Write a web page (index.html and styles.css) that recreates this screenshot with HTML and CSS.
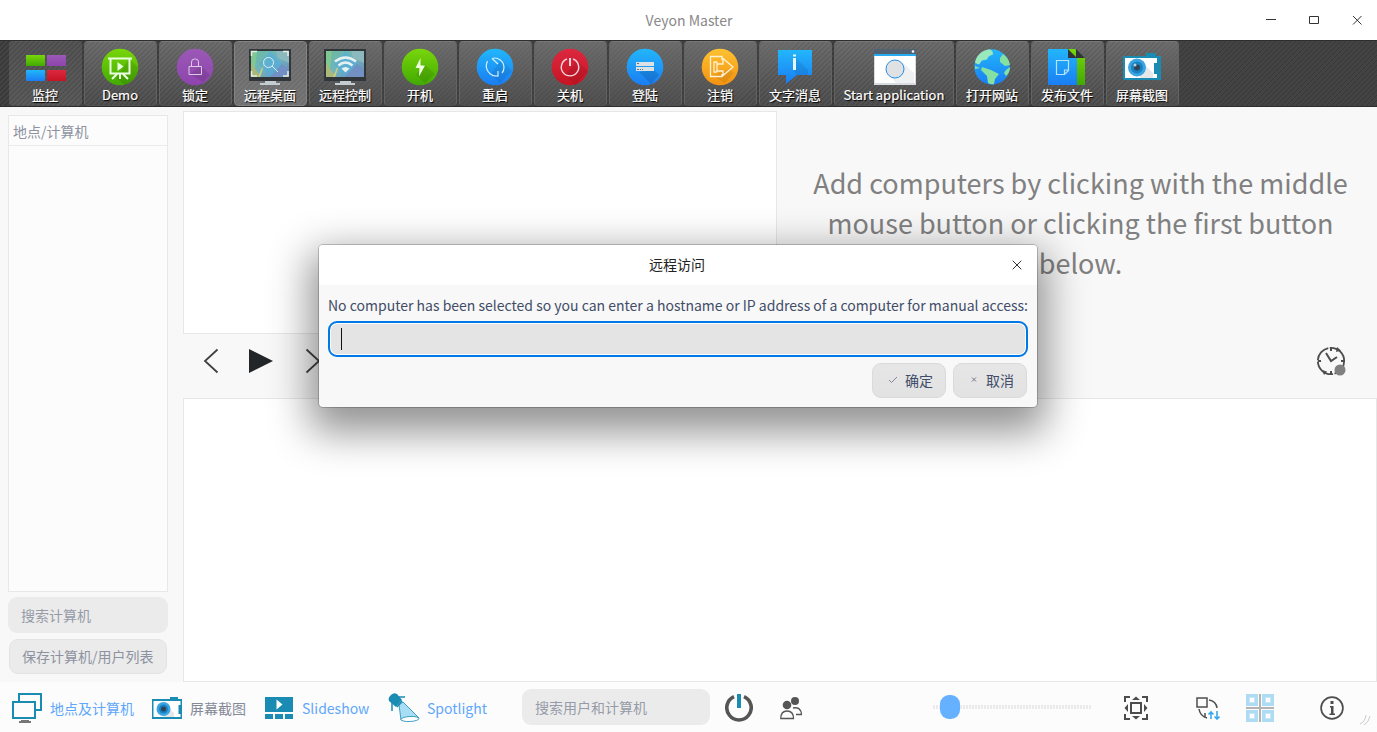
FILE: index.html
```html
<!DOCTYPE html>
<html lang="zh-CN">
<head>
<meta charset="utf-8">
<title>Veyon Master</title>
<link rel="stylesheet" href="styles.css">
</head>
<body>
<svg class="defs" width="0" height="0" aria-hidden="true">
  <defs>
    <linearGradient id="green" x2="0" y2="1"><stop stop-color="#78d60a"/><stop offset="1" stop-color="#42a903"/></linearGradient>
    <linearGradient id="purple" x2="0" y2="1"><stop stop-color="#9b59b6"/><stop offset="1" stop-color="#8e44ad"/></linearGradient>
    <linearGradient id="blue" x2="0" y2="1"><stop stop-color="#22b6fb"/><stop offset="1" stop-color="#1a7df3"/></linearGradient>
    <linearGradient id="red" x2="0" y2="1"><stop stop-color="#dc2840"/><stop offset="1" stop-color="#c61423"/></linearGradient>
    <linearGradient id="orange" x2="0" y2="1"><stop stop-color="#fdc231"/><stop offset="1" stop-color="#f39210"/></linearGradient>
    <linearGradient id="screen" y2="1"><stop stop-color="#6cba9b"/><stop offset=".5" stop-color="#6fb5bf"/><stop offset="1" stop-color="#6c86bb"/></linearGradient>
    <g id="monitor">
      <path d="M0 0h42v32H0z" fill="#31363b"/>
      <path d="M2 2h38v26H2z" fill="url(#screen)"/>
      <path d="M2 2h6l-3 26H2z" fill="#7fc793"/><path d="M2 28V14l10 14z" fill="#aab87c"/>
      <path d="M9 28L20 2l-9 26z" fill="#d2cf7e"/><path d="M21 2l12 13-12 13-11-13z" fill="#53aedb" opacity=".65"/>
      <path d="M27 2h13v12L29 9z" fill="#8bb9bd"/><path d="M21 28l12-13 7 6v7z" fill="#7290c3"/>
      <path d="M16 32h11v2h4v2H11v-2h5z" fill="#c3cdd1"/>
    </g>
    <g id="camera">
      <path d="M23 0h10v3h5v24H0V3h23z" fill="#1a8bb2"/>
      <path d="M2 5h32v5h-3v11h3v4H2z" fill="#fff"/><path d="M18 8l12 12v5H17z" fill="#e5e7e9"/>
      <circle cx="14" cy="14.500" r="9" fill="#3aa5e0"/><circle cx="14" cy="14.500" r="6" fill="#1782c3"/><circle cx="14" cy="14.500" r="3" fill="#2f4356"/><circle cx="12" cy="12" r="1.500" fill="#bcd2dd"/>
    </g>
  </defs>
</svg>

<header class="titlebar">
  <span class="window-title">Veyon Master</span>
  <svg class="window-controls" width="112" height="40" viewBox="0 0 112 40"><path d="M1 19.500h10M44.500 16.500h9v7h-9zM88 16l8.500 8.500M96.500 16l-8.500 8.500" fill="none" stroke="#333"/></svg>
</header>

<nav class="toolbar">
  <div class="tool active"><svg viewBox="0 0 44 38"><path d="M2 7h19v11H2z" fill="url(#green)"/><path d="M23 7h19v11H23z" fill="url(#purple)"/><path d="M2 22h19v11H2z" fill="url(#blue)"/><path d="M23 22h19v11H23z" fill="url(#red)"/></svg><span>监控</span></div>
  <div class="tool"><svg viewBox="0 0 44 38"><circle cx="21" cy="19" r="18.300" fill="url(#green)"/><path d="M30 11l9 8c0 8-5 15-13 18l-9-7z" opacity=".1"/><path d="M9 10.500h24M11.500 11v14.500h19V11M21 26v5M18 26l-5 5M24 26l5 5" fill="none" stroke="#e8ffe0" stroke-width="2"/><path d="M18.500 14l6 4.500-6 4.500z" fill="#e8ffe0"/></svg><span>Demo</span></div>
  <div class="tool"><svg viewBox="0 0 44 38"><circle cx="21" cy="19" r="18.300" fill="url(#purple)"/><path d="M27 18l9 9-7 7-13-8z" opacity=".1"/><path d="M15 18.500h12.500v8H15zM17.500 18v-4q0-3 3-3h1q3 0 3 3v4" fill="none" stroke="#dccbe5"/></svg><span>锁定</span></div>
  <div class="tool hover"><svg viewBox="0 0 44 38"><use href="#monitor" x="0" y="1"/><path d="M2.500 8V3.500H8M34 3.500h5V8M2.500 23v5H8M34 28h5v-5" fill="none" stroke="#e3efe3" stroke-width="1.500"/><circle cx="19.500" cy="14.500" r="5" fill="none" stroke="#e0edf0"/><path d="M23 18l6 6" stroke="#e0edf0"/></svg><span>远程桌面</span></div>
  <div class="tool"><svg viewBox="0 0 44 38"><use href="#monitor" x="0" y="1"/><path d="M11 13.500q10.500-8 21 0M14.500 17.500q7-6 14 0" fill="none" stroke="#e7f1f1" stroke-width="2.500"/><path d="M17.500 20.500q4-3 8 0l-4 4z" fill="#e7f1f1"/></svg><span>远程控制</span></div>
  <div class="tool"><svg viewBox="0 0 44 38"><circle cx="21" cy="19" r="18.300" fill="url(#green)"/><path d="M25 16l11 10-10 9-9-8z" opacity=".09"/><path d="M21.500 10L16.500 20h4l-.5 8.500 6-11h-4.500z" fill="#f0ffdf"/></svg><span>开机</span></div>
  <div class="tool"><svg viewBox="0 0 44 38"><circle cx="21" cy="19" r="18.300" fill="url(#blue)"/><path d="M27 12l11 11-12 12-9-9z" opacity=".08"/><path d="M18 10.500c6-2 12 3 12 9 0 2-.7 4-2 5.500M13.500 13c-3 6 0 13 7 15M18 10.500l6 5.500M18 27.500l6 .5v-5" fill="none" stroke="#d4f0ff" stroke-width="1.200"/></svg><span>重启</span></div>
  <div class="tool"><svg viewBox="0 0 44 38"><circle cx="21" cy="19" r="18.300" fill="url(#red)"/><path d="M28 13l11 10-13 14-10-10z" opacity=".08"/><path d="M18 11a8.700 8.700 0 1 0 6 0" fill="none" stroke="#f6d8dc" stroke-width="1.400"/><path d="M20 10h2v8h-2z" fill="#f6d8dc"/></svg><span>关机</span></div>
  <div class="tool"><svg viewBox="0 0 44 38"><circle cx="21" cy="19" r="18.300" fill="url(#blue)"/><path d="M30 22l5 5-8 9-12-12z" opacity=".12"/><path d="M12 14h18v4H12zM12 19h18v4H12z" fill="#dce1e4"/><path d="M13 15.500h2M13 21.500h2m1 0h1m1 0h1" stroke="#60737e"/></svg><span>登陆</span></div>
  <div class="tool"><svg viewBox="0 0 44 38"><circle cx="21" cy="19" r="18.300" fill="url(#orange)"/><path d="M30 21l5 4-9 10-12-7z" opacity=".07"/><path d="M23 12V8.500H11.500v20H23V26M18 14h-3v10h3M18 14v2h6v-5.500l10 8.500-10 8.500V23h-6z" fill="none" stroke="#fff1d4" stroke-width="1.300"/></svg><span>注销</span></div>
  <div class="tool"><svg viewBox="0 0 44 38"><path d="M4 2h34v25H23l-11 9v-9H4z" fill="url(#blue)"/><path d="M22 10l12 12v5H23l-3-4z" opacity=".08"/><path d="M19 6.500h3v2h-3zM19 10h3v12h-3z" fill="#e5f6ff"/></svg><span>文字消息</span></div>
  <div class="tool wide"><svg viewBox="0 0 44 38"><path d="M1 1h42v36H1z" fill="#d8dce0"/><path d="M1 1h42v5H1z" fill="#536273"/><path d="M1 6h42v2H1z" fill="#26aaf0"/><path d="M2 8h40v27H2z" fill="#fff"/><path d="M29 14l12 11v10H23l-7-8z" fill="#eef0f1"/><circle cx="22" cy="21" r="9" fill="#dfe1e3" stroke="#238eef"/><circle cx="40" cy="3.500" r="1.300" fill="#fff"/></svg><span>Start application</span></div>
  <div class="tool"><svg viewBox="0 0 44 38"><circle cx="21" cy="19" r="17.700" fill="url(#blue)"/><path d="M4 15C5 8 10 3 17 1.500c4-.5 5 2 5 5-3 1-5 2-6 5l-5 1-3 4z" fill="#98eabd"/><path d="M32 6c4 3 6 6 7 11l-5 1-5-4v-4zM11 19l9 3 8 4-4 5-1 5q-3 1-6-1l-1-7-6-6zM35 22l4-3q0 6-4 9l-2-3zM4 18l5 2-5 1z" fill="#84e1a2"/></svg><span>打开网站</span></div>
  <div class="tool"><svg viewBox="0 0 44 38"><path d="M15 1h14l10 9v27H15z" fill="url(#green)"/><path d="M2 1h20v9h9v27H2z" fill="url(#blue)"/><path d="M22 1l9 9h-9zM30 1l9 9h-9z" fill="#30343a"/><path d="M10.500 12.500h12v10l-4 4h-8zM18.500 26v-4h4" fill="none" stroke="#b5e5fa" stroke-width="1.200"/></svg><span>发布文件</span></div>
  <div class="tool"><svg viewBox="0 0 44 38"><use href="#camera" x="2" y="5"/></svg><span>屏幕截图</span></div>
</nav>

<main class="workspace">
  <aside class="sidebar">
    <div class="tree"><div class="tree-head">地点/计算机</div></div>
    <div class="field">搜索计算机</div>
    <div class="button save">保存计算机/用户列表</div>
  </aside>
  <section class="views">
    <div class="upper">
      <div class="slideshow">
        <div class="view"></div>
        <svg class="player" width="200" height="64" viewBox="0 0 200 64"><path d="M34.500 15.500L22 27l12.500 11.500M123.500 15.500L136 27l-12.500 11.500" fill="none" stroke="#3e4144" stroke-width="1.800"/><path d="M66 15l24 12-24 12z" fill="#232629"/></svg>
      </div>
      <div class="spotlight">
        <p class="hint">Add computers by clicking with the middle<br>mouse button or clicking the first button<br>below.</p>
        <svg class="clock" width="30" height="30" viewBox="0 0 30 30"><circle cx="15" cy="15" r="13.200" fill="none" stroke="#4d4d4d" stroke-width="1.800" stroke-dasharray="17 1.500 22 1.500"/><path d="M15 2v3M15 25v3M2 15h3M25 15h3M10 7l5 8 6-4" fill="none" stroke="#4d4d4d" stroke-width="2"/><path d="M21 1l4 3.500-5 1.500zM8 29l-2-5 5 1.500z" fill="#4d4d4d"/><circle cx="24" cy="24" r="5.500" fill="#808080"/></svg>
      </div>
    </div>
    <div class="view monitoring"></div>
  </section>
</main>

<footer class="statusbar">
  <div class="toggle places"><svg width="32" height="32" viewBox="0 0 32 32"><path d="M8 9V2h22v16h-5M2 10h22v16H2z" fill="none" stroke="#1a8bb2" stroke-width="2"/><path d="M10 28h8v1h2v2H8v-2h2z" fill="#777"/></svg><span>地点及计算机</span></div>
  <div class="toggle shots muted"><svg width="30" height="23" viewBox="0 0 30 23"><path d="M18 0h8v2h4v20H0V2h18z" fill="#1a8bb2"/><path d="M1.500 4h27v4h-2v9h2v3h-27z" fill="#fff"/><path d="M12 7l10 9v4H11z" fill="#e5e7e9"/><circle cx="11.500" cy="12" r="7" fill="#3aa5e0"/><circle cx="11.500" cy="12" r="4.500" fill="#1782c3"/><circle cx="11.500" cy="12" r="2.500" fill="#2f4356"/></svg><span>屏幕截图</span></div>
  <div class="toggle slides"><svg width="28" height="22" viewBox="0 0 28 22"><path d="M0 0h28v15H0zM0 17h8v5H0zM10 17h8v5h-8zM20 17h8v5h-8z" fill="#1a8bb2"/><path d="M11.500 2.500l6 5-6 5z" fill="#fff"/></svg><span>Slideshow</span></div>
  <div class="toggle spots"><svg width="32" height="30" viewBox="0 0 32 30"><path d="M11 12l4-3 16 16q-6 4-18 2z" fill="#a8def5" stroke="#1a8bb2" stroke-width=".8"/><ellipse cx="22" cy="26" rx="9" ry="2.500" fill="#fff" stroke="#1a8bb2" stroke-width=".8" transform="rotate(-3 22 26)"/><path d="M2 3q3-4 7-2l5 6-6 7-7-6q-1-3 1-5z" fill="#1a8bb2"/><path d="M8 4h9M4 9v9M9 14l5-6" stroke="#1a8bb2" stroke-width="1.500"/></svg><span>Spotlight</span></div>
  <div class="field search">搜索用户和计算机</div>
  <svg class="power" width="28" height="28" viewBox="0 0 28 28"><path d="M9 2.600a12.200 12.200 0 1 0 10 0" fill="none" stroke="#555" stroke-width="3.600"/><path d="M12 0h4v14h-4z" fill="#1a8bb2"/></svg>
  <svg class="users" width="22" height="23" viewBox="0 0 22 23"><circle cx="15" cy="4" r="4" fill="#555"/><circle cx="7" cy="8" r="4.300" fill="#555"/><path d="M.8 21.500q0-7.500 6.300-7.500t6.400 7.500zM13 11q8-1.500 8.500 6.500H16" fill="none" stroke="#555" stroke-width="1.300"/></svg>
  <div class="slider"><span class="knob"></span></div>
  <svg class="fit" width="24" height="24" viewBox="0 0 24 24"><path d="M1 6V1h5M18 1h5v5M1 18v5h5M18 23h5v-5M7 7h10v10H7z" fill="none" stroke="#4d4d4d" stroke-width="2"/><path d="M8 4l4-3.500L16 4zM8 20l4 3.500 4-3.500zM4 8L.5 12 4 16zM20 8l3.500 4L20 16z" fill="#4d4d4d"/></svg>
  <svg class="arrange" width="24" height="23" viewBox="0 0 24 23"><path d="M1 1h10v9H1zM13 3q7 1 8 8M3 12q1 7 8 9M9 16v5" fill="none" stroke="#4d4d4d" stroke-width="1.500"/><path d="M15 22v-7m-2.500 2.500L15 15l2.500 2.500M21 14v8m-2.500-2.500L21 22l2.500-2.500" fill="none" stroke="#35a8eb" stroke-width="1.600"/></svg>
  <svg class="grid" width="28" height="28" viewBox="0 0 28 28"><path d="M0 0h12v12H0zM16 0h12v12H16zM0 16h12v12H0zM16 16h12v12H16z" fill="#addcf4"/><path d="M14 0v28M0 14h28" stroke="#b3b3b3" stroke-width="2"/><path d="M3.500 3.500h5v5h-5zM19.500 3.500h5v5h-5zM3.500 19.500h5v5h-5zM19.500 19.500h5v5h-5z" fill="#fff" stroke="#c9e7f6"/></svg>
  <svg class="info" width="24" height="24" viewBox="0 0 24 24"><circle cx="12" cy="12" r="10.900" fill="none" stroke="#4d4d4d" stroke-width="1.700"/><path d="M10.500 5h3v3h-3zM10 10h3.500v7.500H15V19H9.500v-1.500H11v-6h-1z" fill="#4d4d4d"/></svg>
  <svg class="grip" width="12" height="12" viewBox="0 0 12 12"><path d="M1 10q5-2 6-9M5 11q5-3 6-9" fill="none" stroke="#ccc"/></svg>
</footer>

<div class="dialog">
  <div class="dialog-title">远程访问<svg class="dialog-close" width="10" height="10" viewBox="0 0 10 10"><path d="M.7.7l8.600 8.600M9.300.7L.7 9.300" stroke="#333"/></svg></div>
  <div class="dialog-body">
    <p>No computer has been selected so you can enter a hostname or IP address of a computer for manual access:</p>
    <div class="host-input"><i class="caret"></i></div>
    <div class="actions">
      <div class="button"><svg width="10" height="8" viewBox="0 0 10 8"><path d="M1 4l2.500 2.500L9 1" fill="none" stroke="#838794"/></svg>确定</div>
      <div class="button"><svg width="10" height="8" viewBox="0 0 10 8"><path d="M3 1.500l4 4M7 1.500l-4 4" stroke="#73798a"/></svg>取消</div>
    </div>
  </div>
</div>
</body>
</html>
```
FILE: styles.css
```css
* { box-sizing: border-box; }
body { margin: 0; width: 1377px; height: 732px; overflow: hidden; display: flex; flex-direction: column; background: #f8f8f8; color: #414d68; font: 14px/20px "Noto Sans CJK SC", sans-serif; }
p { margin: 0; }
svg { display: block; flex: none; }
.defs { position: absolute; }

.titlebar { height: 40px; flex: none; background: #fff; display: grid; place-items: center; position: relative; color: #888; padding-left: 1px; }
.window-controls { position: absolute; right: 0; top: 0; }

.toolbar { height: 67px; flex: none; display: flex; gap: 2px; padding: 0 9px; border-top: 1px solid #2d2e30; border-bottom: 1px solid #2d2e30; background: repeating-linear-gradient(135deg, #434343 0 2.500px, #383838 2.500px 3.540px); }
.tool { width: 73px; height: 65px; flex: none; display: flex; flex-direction: column; align-items: center; padding: 6px 1px 0 0; border-radius: 4px; border: 1px solid #6b6b69; border-color: #777 #636363 #505050; background: linear-gradient(#ffffff38, #ffffff12); color: #fff; font-size: 13px; line-height: 18px; text-shadow: 1px 1px 1px #000; -webkit-text-stroke: .2px #fff; white-space: nowrap; }
.tool svg { width: 44px; height: 38px; margin: 0 0 0 1px; }
.tool.active { border-color: transparent; background: linear-gradient(#ffffff18, #ffffff20); }
.tool.hover { background: linear-gradient(#ffffff40, #ffffff45); border-color: #838383; }
.tool.wide { width: 120px; padding-right: 0; }

.workspace { flex: 1; min-height: 0; display: flex; }
.sidebar { width: 183px; padding: 8px 15px 8px 8px; display: flex; flex-direction: column; color: #8d92a0; }
.tree { height: 477px; border: 1px solid #e8e8e8; background: #fcfcfc; }
.tree-head { height: 30px; border-bottom: 1px solid #ebebeb; padding: 5px 4px; line-height: 20px; }
.field { height: 36px; margin-top: 5px; border-radius: 9px; padding: 8px 13px; background: #ebebeb; color: #969ba8; }
.button { display: flex; align-items: center; height: 35px; border: 1px solid #dadada; border-radius: 9px; background: linear-gradient(#e6e6e6, #e2e2e2); padding-bottom: 2px; }
.button.save { margin: 6px 1px 0; padding-left: 12px; border-color: #e3e3e3; background: #ebebeb; white-space: nowrap; }

.views { flex: 1; display: flex; flex-direction: column; padding-top: 4px; }
.upper { height: 287px; display: flex; }
.slideshow { width: 594px; }
.view { height: 223px; border: 1px solid #e7e7e7; background: #fff; }
.monitoring { height: 284px; }
.spotlight { flex: 1; padding: 52px 0 0 7px; display: flex; flex-direction: column; }
.hint { text-align: center; color: #808080; font-size: 27px; line-height: 40px; white-space: nowrap; }
.clock { margin: 63px 31px 0 auto; }

.statusbar { height: 50px; flex: none; display: flex; align-items: center; background: #fcfcfc; padding: 2px 5px 0 11px; }
.toggle { display: flex; align-items: center; color: #60a7fb; white-space: nowrap; }
.toggle.muted { color: #858a98; }
.places { width: 141px; gap: 7px; }
.shots { width: 113px; gap: 8px; }
.slides { width: 123px; gap: 9px; }
.spots { width: 134px; gap: 7px; }
.search { width: 188px; margin: -2px 15px 0 0; }
.users { margin-left: 27px; }
.slider { width: 159px; height: 4px; margin: -2px 0 0 131px; display: flex; align-items: center; background: repeating-linear-gradient(90deg, #eaeaea 0 2px, transparent 2px 3px); }
.knob { width: 20px; height: 24px; margin-left: 7px; border-radius: 9px; background: #65b1ff; }
.fit { margin-left: 32px; }
.arrange { margin-left: 48px; }
.grid { margin-left: 26px; }
.info { margin-left: 46px; }
.grip { margin: 24px 0 0 15px; }

.dialog { position: absolute; left: 319px; top: 245px; width: 718px; height: 162px; border-radius: 4px; background: #f8f8f8; box-shadow: 0 0 0 1px #0003, 0 16px 40px 9px #0000006e; }
.dialog-title { height: 40px; border-radius: 4px 4px 0 0; display: grid; place-items: center; background: #fff; color: #222; position: relative; padding: 0 2px 2px 0; }
.dialog-close { position: absolute; right: 15px; top: 15px; }
.dialog-body { padding: 10px 9px; white-space: nowrap; }
.host-input { height: 36px; margin-top: 6px; padding: 6px 11px; border: 2px solid #0078e5; border-radius: 9px; background: #e4e4e4; box-shadow: inset 0 0 0 1px #fff; }
.caret { display: block; width: 1px; height: 22px; background: #111; margin-top: -1px; }
.actions { display: flex; justify-content: flex-end; gap: 7px; padding: 6px 1px 0; }
.actions .button { width: 74px; gap: 7px; padding-left: 15px; }
```
